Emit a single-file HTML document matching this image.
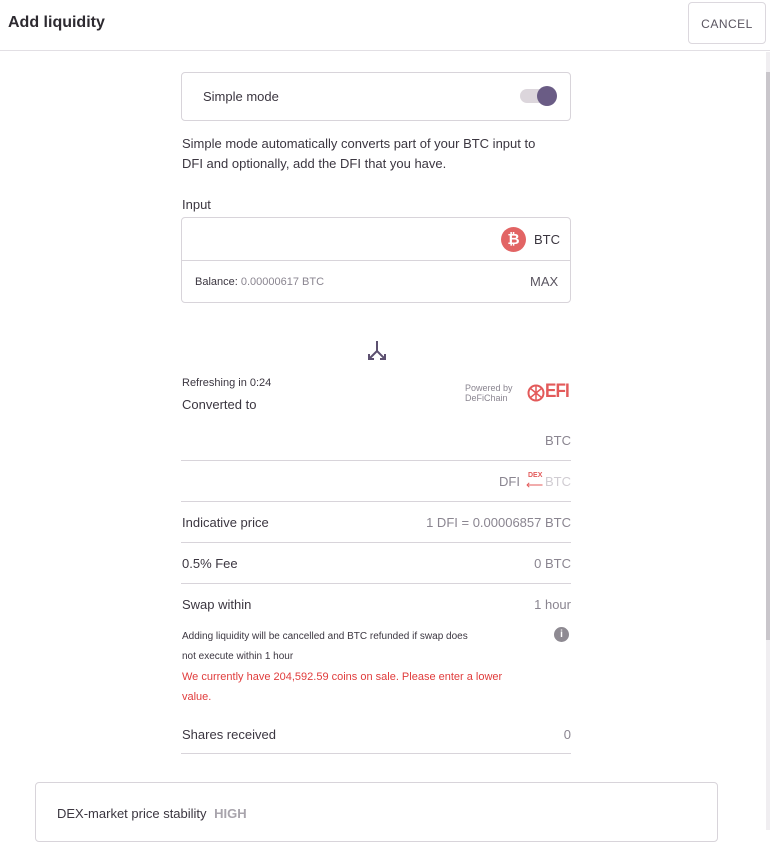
<!DOCTYPE html>
<html><head><style>
*{box-sizing:border-box;margin:0;padding:0}
body{width:770px;height:830px;overflow:hidden;background:#fff;font-family:"Liberation Sans",sans-serif;color:#3b3640;position:relative}
.hdr{position:absolute;left:0;top:0;width:770px;height:51px;border-bottom:1px solid #e2dfe4}
.hdr h1{position:absolute;left:8px;top:14px;font-size:16px;font-weight:bold;color:#2d2a30}
.cancel{position:absolute;left:688px;top:2px;width:78px;height:42px;border:1px solid #dcd8de;border-radius:4px;font-size:12px;color:#5a5560;text-align:center;line-height:42px;letter-spacing:.5px}
.sb{position:absolute;left:766px;top:52px;width:4px;height:778px;background:#f0eef1}
.sbt{position:absolute;left:766px;top:72px;width:4px;height:568px;background:#c9c6cb}
.abs{position:absolute}
.box{position:absolute;left:181px;width:390px;border:1px solid #d8d4da;border-radius:4px}
.t{position:absolute;font-size:13px;white-space:nowrap}
.r{right:199px;text-align:right}
.line{position:absolute;left:181px;width:390px;height:1px;background:#d8d4da}
.g{color:#8a8590}
</style></head><body>
<div class="hdr"><h1>Add liquidity</h1><div class="cancel">CANCEL</div></div>
<div class="sb"></div><div class="sbt"></div>

<div class="box" style="top:72px;height:49px"></div>
<div class="t" style="left:203px;top:89px">Simple mode</div>
<div class="abs" style="left:520px;top:89px;width:34px;height:14px;border-radius:7px;background:#dcd6dc"></div>
<div class="abs" style="left:537px;top:86px;width:20px;height:20px;border-radius:50%;background:#6a5c85"></div>

<div class="t" style="left:182px;top:134px;line-height:20px">Simple mode automatically converts part of your BTC input to<br>DFI and optionally, add the DFI that you have.</div>

<div class="t" style="left:182px;top:197px">Input</div>
<div class="box" style="top:217px;height:86px"></div>
<div class="line" style="top:260px"></div>
<div class="abs" style="left:501px;top:227px;width:25px;height:25px;border-radius:50%;background:#e26464;color:#fff;font-weight:bold;font-size:15px;text-align:center;line-height:25px">₿</div>
<div class="t" style="left:534px;top:232px">BTC</div>
<div class="t" style="left:195px;top:276px;font-size:11px">Balance: <span class="g">0.00000617 BTC</span></div>
<div class="t" style="left:530px;top:274px;color:#5a5560">MAX</div>

<svg class="abs" style="left:366px;top:340px" width="22" height="22" viewBox="0 0 22 22"><path d="M11 1v10M11 11l-8 8M11 11l8 8M3 14v5h5M19 14v5h-5" stroke="#5c5070" stroke-width="2" fill="none"/></svg>

<div class="t" style="left:182px;top:377px;font-size:11px">Refreshing in 0:24</div>
<div class="t" style="left:182px;top:397px">Converted to</div>
<div class="t g" style="left:465px;top:383px;font-size:9px;line-height:10px">Powered by<br>DeFiChain</div>
<svg class="abs" style="left:527px;top:383px" width="18" height="20" viewBox="0 0 18 20"><circle cx="9" cy="10" r="7.5" fill="none" stroke="#e35a5a" stroke-width="2"/><path d="M9 2v16M3.5 5.5l11 9M14.5 5.5l-11 9" stroke="#e35a5a" stroke-width="1.5"/></svg>
<div class="t" style="left:545px;top:381px;font-size:19px;color:#e35a5a;font-weight:bold;letter-spacing:-1px;transform:scaleX(.9);transform-origin:left">EFI</div>

<div class="t r g" style="top:433px">BTC</div>
<div class="line" style="top:460px"></div>
<div class="t g" style="left:499px;top:474px">DFI</div>
<div class="t" style="left:528px;top:472px;font-size:7px;color:#e35a5a;font-weight:bold">DEX</div>
<div class="t" style="left:526px;top:478px;font-size:12px;color:#e35a5a">⟵</div>
<div class="t r" style="top:474px;color:#d0ccd2">BTC</div>
<div class="line" style="top:501px"></div>
<div class="t" style="left:182px;top:515px">Indicative price</div>
<div class="t r g" style="top:515px">1 DFI = 0.00006857 BTC</div>
<div class="line" style="top:542px"></div>
<div class="t" style="left:182px;top:556px">0.5% Fee</div>
<div class="t r g" style="top:556px">0 BTC</div>
<div class="line" style="top:583px"></div>
<div class="t" style="left:182px;top:597px">Swap within</div>
<div class="t r g" style="top:597px">1 hour</div>
<div class="t" style="left:182px;top:627px;font-size:10px;line-height:20px">Adding liquidity will be cancelled and BTC refunded if swap does<br>not execute within 1 hour</div>
<div class="abs" style="left:554px;top:627px;width:15px;height:15px;border-radius:50%;background:#8e8a92;color:#fff;font-size:10px;font-weight:bold;text-align:center;line-height:15px">i</div>
<div class="t" style="left:182px;top:667px;font-size:11px;line-height:20px;color:#e03c3c">We currently have 204,592.59 coins on sale. Please enter a lower<br>value.</div>
<div class="t" style="left:182px;top:727px">Shares received</div>
<div class="t r g" style="top:727px">0</div>
<div class="line" style="top:753px"></div>

<div class="abs" style="left:35px;top:782px;width:683px;height:60px;border:1px solid #d8d4da;border-radius:4px"></div>
<div class="t" style="left:57px;top:806px">DEX-market price stability <b style="color:#a8a4ac;margin-left:4px">HIGH</b></div>
</body></html>
